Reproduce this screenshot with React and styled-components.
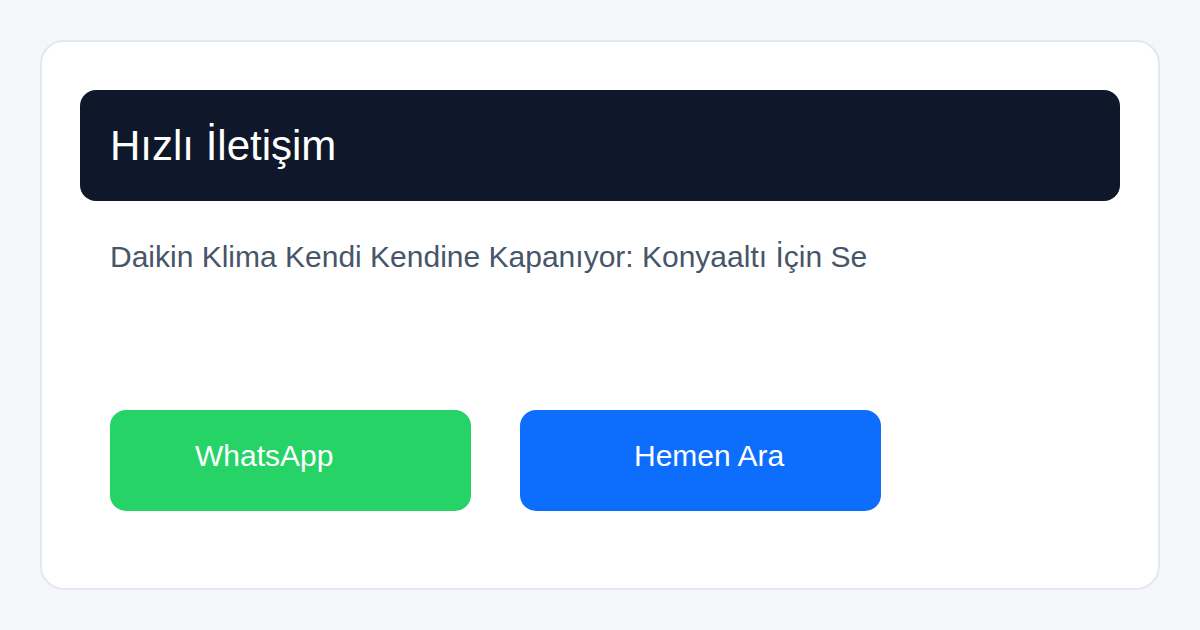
import React from "react";
import styled, { createGlobalStyle } from "styled-components";

const Global = createGlobalStyle`
  html, body { margin: 0; padding: 0; }
  body {
    background: #f4f6fa;
    font-family: "Liberation Sans", Arial, sans-serif;
    width: 1200px;
    height: 630px;
    overflow: hidden;
  }
`;

const Page = styled.div`
  padding: 40px;
  box-sizing: border-box;
  width: 1200px;
  height: 630px;
`;

const Card = styled.div`
  box-sizing: border-box;
  height: 550px;
  background: #ffffff;
  border: 2px solid #e3e8f0;
  border-radius: 24px;
  padding: 48px 38px 0;
  display: flex;
  flex-direction: column;
`;

const Header = styled.div`
  height: 111px;
  background: #0f172a;
  border-radius: 16px;
  display: flex;
  align-items: center;
  padding: 0 30px;
`;

const Title = styled.h1`
  margin: 0;
  font-weight: 400;
  font-size: 42px;
  line-height: 48px;
  color: #ffffff;
  font-family: "Liberation Sans", Arial, sans-serif;
`;

const Subtitle = styled.p`
  margin: 39px 0 0 30px;
  font-size: 30px;
  line-height: 34px;
  color: #475569;
`;

const Actions = styled.div`
  display: flex;
  gap: 49px;
  margin: 136px 0 0 30px;
`;

const ActionButton = styled.a`
  box-sizing: border-box;
  width: 361px;
  height: 101px;
  border-radius: 16px;
  background: ${(p) => p.$bg};
  color: #ffffff;
  font-size: 30px;
  text-decoration: none;
  display: flex;
  align-items: center;
  padding: 0 0 10px ${(p) => p.$indent}px;
`;

export default function App() {
  return (
    <>
      <Global />
      <Page>
        <Card>
          <Header>
            <Title>Hızlı İletişim</Title>
          </Header>
          <Subtitle>Daikin Klima Kendi Kendine Kapanıyor: Konyaaltı İçin Se</Subtitle>
          <Actions>
            <ActionButton $bg="#25d366" $indent={85}>WhatsApp</ActionButton>
            <ActionButton $bg="#0d6efd" $indent={114}>Hemen Ara</ActionButton>
          </Actions>
        </Card>
      </Page>
    </>
  );
}
